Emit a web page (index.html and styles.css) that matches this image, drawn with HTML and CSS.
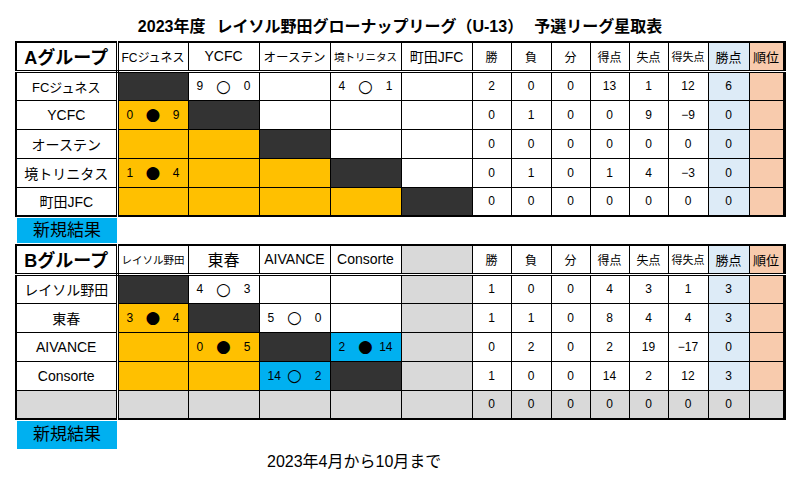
FILE: index.html
```html
<!DOCTYPE html>
<html lang="ja">
<head>
<meta charset="utf-8">
<title>2023年度 レイソル野田グローナップリーグ（U-13） 予選リーグ星取表</title>
<link rel="stylesheet" href="styles.css">
</head>
<body>
<div class="page">
  <h1 class="title">2023年度<span class="sp"></span>レイソル野田グローナップリーグ（U-13）<span class="sp"></span>予選リーグ星取表</h1>

  <table class="league">
    <colgroup>
      <col class="w-name"><col class="w-opp"><col class="w-opp"><col class="w-opp"><col class="w-opp"><col class="w-opp">
      <col class="w-s39"><col class="w-s40"><col class="w-s39"><col class="w-s39"><col class="w-s39"><col class="w-s40"><col class="w-pts"><col class="w-rank">
    </colgroup>
    <tr class="head">
      <th class="name group">Aグループ</th>
      <th class="team f12">FCジュネス</th>
      <th class="team">YCFC</th>
      <th class="team f125">オーステン</th>
      <th class="team f105">境トリニタス</th>
      <th class="team">町田JFC</th>
      <th class="st">勝</th><th class="st">負</th><th class="st">分</th><th class="st">得点</th><th class="st">失点</th><th class="st f11">得失点</th>
      <th class="st big pts">勝点</th><th class="st big rank">順位</th>
    </tr>
    <tr>
      <td class="name f13">FCジュネス</td>
      <td class="dark"></td>
      <td><div class="res"><span>9</span><span class="mark">○</span><span>0</span></div></td>
      <td></td>
      <td><div class="res"><span>4</span><span class="mark">○</span><span>1</span></div></td>
      <td></td>
      <td class="num">2</td><td class="num">0</td><td class="num">0</td><td class="num">13</td><td class="num">1</td><td class="num">12</td><td class="num pts">6</td><td class="rank"></td>
    </tr>
    <tr>
      <td class="name">YCFC</td>
      <td class="org"><div class="res"><span>0</span><span class="mark">●</span><span>9</span></div></td>
      <td class="dark"></td>
      <td></td>
      <td></td>
      <td></td>
      <td class="num">0</td><td class="num">1</td><td class="num">0</td><td class="num">0</td><td class="num">9</td><td class="num">−9</td><td class="num pts">0</td><td class="rank"></td>
    </tr>
    <tr>
      <td class="name">オーステン</td>
      <td class="org"></td>
      <td class="org"></td>
      <td class="dark"></td>
      <td></td>
      <td></td>
      <td class="num">0</td><td class="num">0</td><td class="num">0</td><td class="num">0</td><td class="num">0</td><td class="num">0</td><td class="num pts">0</td><td class="rank"></td>
    </tr>
    <tr>
      <td class="name">境トリニタス</td>
      <td class="org"><div class="res"><span>1</span><span class="mark">●</span><span>4</span></div></td>
      <td class="org"></td>
      <td class="org"></td>
      <td class="dark"></td>
      <td></td>
      <td class="num">0</td><td class="num">1</td><td class="num">0</td><td class="num">1</td><td class="num">4</td><td class="num">−3</td><td class="num pts">0</td><td class="rank"></td>
    </tr>
    <tr>
      <td class="name">町田JFC</td>
      <td class="org"></td>
      <td class="org"></td>
      <td class="org"></td>
      <td class="org"></td>
      <td class="dark"></td>
      <td class="num">0</td><td class="num">0</td><td class="num">0</td><td class="num">0</td><td class="num">0</td><td class="num">0</td><td class="num pts">0</td><td class="rank"></td>
    </tr>
  </table>

  <div class="newbtn">新規結果</div>

  <table class="league">
    <colgroup>
      <col class="w-name"><col class="w-opp"><col class="w-opp"><col class="w-opp"><col class="w-opp"><col class="w-opp">
      <col class="w-s39"><col class="w-s40"><col class="w-s39"><col class="w-s39"><col class="w-s39"><col class="w-s40"><col class="w-pts"><col class="w-rank">
    </colgroup>
    <tr class="head">
      <th class="name group">Bグループ</th>
      <th class="team f105">レイソル野田</th>
      <th class="team f16">東春</th>
      <th class="team">AIVANCE</th>
      <th class="team">Consorte</th>
      <th class="gray"></th>
      <th class="st">勝</th><th class="st">負</th><th class="st">分</th><th class="st">得点</th><th class="st">失点</th><th class="st f11">得失点</th>
      <th class="st big pts">勝点</th><th class="st big rank">順位</th>
    </tr>
    <tr>
      <td class="name">レイソル野田</td>
      <td class="dark"></td>
      <td><div class="res"><span>4</span><span class="mark">○</span><span>3</span></div></td>
      <td></td>
      <td></td>
      <td class="gray"></td>
      <td class="num">1</td><td class="num">0</td><td class="num">0</td><td class="num">4</td><td class="num">3</td><td class="num">1</td><td class="num pts">3</td><td class="rank"></td>
    </tr>
    <tr>
      <td class="name">東春</td>
      <td class="org"><div class="res"><span>3</span><span class="mark">●</span><span>4</span></div></td>
      <td class="dark"></td>
      <td><div class="res"><span>5</span><span class="mark">○</span><span>0</span></div></td>
      <td></td>
      <td class="gray"></td>
      <td class="num">1</td><td class="num">1</td><td class="num">0</td><td class="num">8</td><td class="num">4</td><td class="num">4</td><td class="num pts">3</td><td class="rank"></td>
    </tr>
    <tr>
      <td class="name">AIVANCE</td>
      <td class="org"></td>
      <td class="org"><div class="res"><span>0</span><span class="mark">●</span><span>5</span></div></td>
      <td class="dark"></td>
      <td class="blue"><div class="res"><span>2</span><span class="mark">●</span><span>14</span></div></td>
      <td class="gray"></td>
      <td class="num">0</td><td class="num">2</td><td class="num">0</td><td class="num">2</td><td class="num">19</td><td class="num">−17</td><td class="num pts">0</td><td class="rank"></td>
    </tr>
    <tr>
      <td class="name">Consorte</td>
      <td class="org"></td>
      <td class="org"></td>
      <td class="blue"><div class="res"><span>14</span><span class="mark">○</span><span>2</span></div></td>
      <td class="dark"></td>
      <td class="gray"></td>
      <td class="num">1</td><td class="num">0</td><td class="num">0</td><td class="num">14</td><td class="num">2</td><td class="num">12</td><td class="num pts">3</td><td class="rank"></td>
    </tr>
    <tr class="blank">
      <td class="name"></td>
      <td></td><td></td><td></td><td></td><td></td>
      <td class="num">0</td><td class="num">0</td><td class="num">0</td><td class="num">0</td><td class="num">0</td><td class="num">0</td><td class="num">0</td><td></td>
    </tr>
  </table>

  <div class="newbtn tall">新規結果</div>

  <p class="period">2023年4月から10月まで</p>
</div>
</body>
</html>
```
FILE: styles.css
```css
body {
  margin: 0;
  background: #fff;
  color: #000;
  font-family: "Liberation Sans", "Noto Sans CJK JP", sans-serif;
}

.page {
  width: 800px;
  height: 496px;
  overflow: hidden;
}

.title {
  margin: 17px 0 4px;
  font-size: 16px;
  line-height: 20px;
  font-weight: bold;
  text-align: center;
}

.title .sp {
  display: inline-block;
  width: 11px;
}

.league {
  margin-left: 15px;
  border-collapse: collapse;
  table-layout: fixed;
  border: 2px solid #000;
  border-right-width: 3px;
}

.w-name { width: 101px; }
.w-opp { width: 71px; }
.w-s39 { width: 39px; }
.w-s40 { width: 40px; }
.w-pts { width: 41px; }
.w-rank { width: 35px; }

.league tr {
  height: 29px;
}

.league th,
.league td {
  border: 1px solid #000;
  padding: 0;
  text-align: center;
  vertical-align: middle;
  font-weight: normal;
  font-size: 14px;
  white-space: nowrap;
  overflow: hidden;
}

.league .name {
  border-right: 3px double #000;
}

.league .head th {
  border-bottom: 3px double #000;
}

.league .group {
  font-size: 18px;
  font-weight: bold;
}

.team { font-size: 14px; }
.f12 { font-size: 12px !important; }
.f125 { font-size: 12.5px !important; }
.f105 { font-size: 10.5px !important; }
.f11 { font-size: 11px !important; }
.f13 { font-size: 13px !important; }
.f16 { font-size: 16px !important; }

.league .st {
  font-size: 12px;
}

.league .st.big {
  font-size: 13px;
}

.league .num {
  font-size: 12px;
}

.pts { background: #ddebf7; }
.rank { background: #f8cbad; }
.dark { background: #333333; }
.org { background: #ffc000; }
.blue { background: #00b0f0; }
.gray { background: #d9d9d9; }

.league .blank td {
  background: #d9d9d9;
}

.res {
  display: grid;
  grid-template-columns: 1fr auto 1fr;
  align-items: center;
  padding: 0 8px;
  font-size: 12px;
}

.res span:first-child { justify-self: start; }
.res span:last-child { justify-self: end; }

.res .mark {
  font-family: "DejaVu Sans", sans-serif;
  font-size: 17px;
  line-height: 1;
}

.newbtn {
  width: 100px;
  height: 25px;
  margin: 1px 0 1px 17px;
  background: #00b0f0;
  font-size: 17px;
  line-height: 25px;
  text-align: center;
}

.newbtn.tall {
  height: 28px;
  line-height: 28px;
}

.period {
  margin: 3px 0 0 267px;
  font-size: 16px;
  line-height: 20px;
}
```
